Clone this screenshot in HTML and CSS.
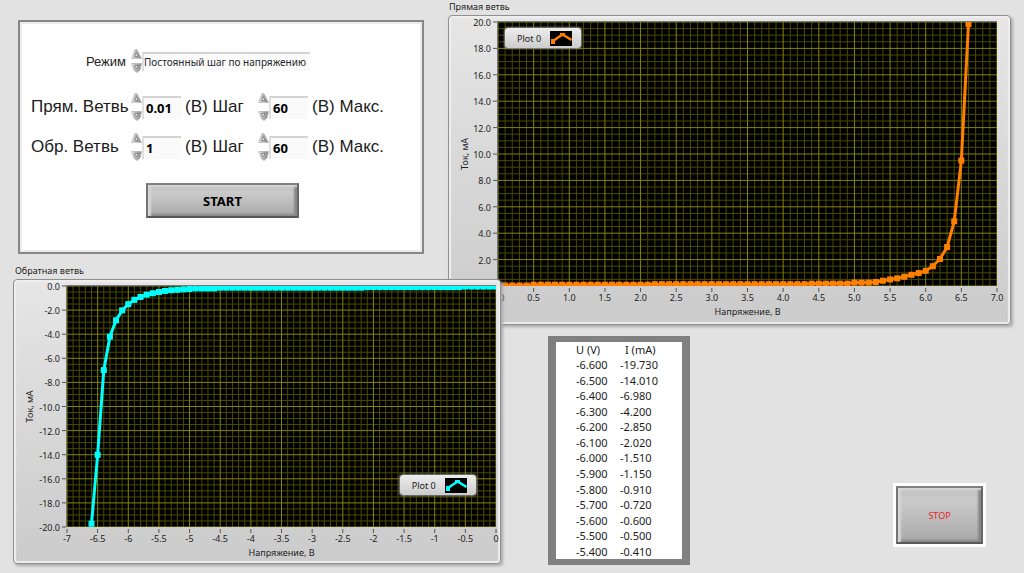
FILE: index.html
```
<!DOCTYPE html>
<html lang="ru">
<head>
<meta charset="utf-8">
<meta name="viewport" content="width=device-width, initial-scale=1">
<title>Вольт-амперная характеристика</title>
<link rel="stylesheet" href="styles.css">
</head>
<body>
<svg class="sprites" aria-hidden="true">
  <defs>
    <linearGradient id="metal" x1="0" x2="1" y1="0" y2="0">
      <stop offset="0" stop-color="#e4e4e4"/>
      <stop offset="1" stop-color="#848484"/>
    </linearGradient>
  </defs>
  <symbol id="inc" viewBox="0 0 11 10">
    <path d="M4 .5H6L10.5 9.5H.5Z" fill="url(#metal)" stroke="#b4b4b4" stroke-width=".6"/>
    <path d="M5.3 3.500 7 7.5H3.8Z" fill="#f4f4f4" stroke="#777" stroke-width=".8"/>
  </symbol>
  <symbol id="dec" viewBox="0 0 11 10">
    <path d="M.5.5H10.5L9 7 6 9.6 3.5 8Z" fill="url(#metal)" stroke="#a8a8a8" stroke-width=".6"/>
    <path d="M3.6 2.5H7.2L5.4 6Z" fill="#f4f4f4" stroke="#777" stroke-width=".8"/>
  </symbol>
</svg>
<main class="front-panel">
  <div class="column">
    <form class="settings">
      <div class="row row-mode">
        <label class="mode-label" for="mode">Режим</label>
        <div class="field field-wide">
          <span class="spin">
            <button type="button" aria-label="Предыдущий режим"><svg><use href="#inc"/></svg></button>
            <button type="button" aria-label="Следующий режим"><svg><use href="#dec"/></svg></button>
          </span>
          <select id="mode" class="box box-mode"><option>Постоянный шаг по напряжению</option></select>
        </div>
      </div>
      <div class="row">
        <label for="fstep">Прям. Ветвь</label>
        <div class="field">
          <span class="spin">
            <button type="button" aria-label="Больше"><svg><use href="#inc"/></svg></button>
            <button type="button" aria-label="Меньше"><svg><use href="#dec"/></svg></button>
          </span>
          <input id="fstep" class="box" type="text" value="0.01">
        </div>
        <span class="unit">(В) Шаг</span>
        <div class="field">
          <span class="spin">
            <button type="button" aria-label="Больше"><svg><use href="#inc"/></svg></button>
            <button type="button" aria-label="Меньше"><svg><use href="#dec"/></svg></button>
          </span>
          <input id="fmax" class="box" type="text" value="60">
        </div>
        <label class="unit" for="fmax">(В) Макс.</label>
      </div>
      <div class="row">
        <label for="rstep">Обр. Ветвь</label>
        <div class="field">
          <span class="spin">
            <button type="button" aria-label="Больше"><svg><use href="#inc"/></svg></button>
            <button type="button" aria-label="Меньше"><svg><use href="#dec"/></svg></button>
          </span>
          <input id="rstep" class="box" type="text" value="1">
        </div>
        <span class="unit">(В) Шаг</span>
        <div class="field">
          <span class="spin">
            <button type="button" aria-label="Больше"><svg><use href="#inc"/></svg></button>
            <button type="button" aria-label="Меньше"><svg><use href="#dec"/></svg></button>
          </span>
          <input id="rmax" class="box" type="text" value="60">
        </div>
        <label class="unit" for="rmax">(В) Макс.</label>
      </div>
      <button type="button" class="metal start">START</button>
    </form>

    <section class="reverse">
      <h2 class="caption">Обратная ветвь</h2>
      <div class="graph">
        <svg id="reverse" viewBox="14 280 486 283" role="img" aria-label="Обратная ветвь"></svg>
        <div class="legend legend-reverse">Plot 0
          <svg viewBox="0 0 22 15"><rect width="22" height="15" fill="#000"/><path d="M3 10 12.500 3.500 21.500 9" fill="none" stroke="#00ffff" stroke-width="2.500"/><path d="M1 8h4v5H1zM10 2h5v3h-5z" fill="#00ffff"/></svg>
        </div>
      </div>
    </section>
  </div>

  <div class="column">
    <section class="forward">
      <h2 class="caption">Прямая ветвь</h2>
      <div class="graph">
        <svg id="forward" viewBox="449 16 561 308" role="img" aria-label="Прямая ветвь"></svg>
        <div class="legend legend-forward">Plot 0
          <svg viewBox="0 0 22 15"><rect width="22" height="15" fill="#000"/><path d="M3 10 12.500 3.500 21.500 9" fill="none" stroke="#ff8000" stroke-width="2.500"/><path d="M1 8h4v5H1zM10 2h5v3h-5z" fill="#ff8000"/></svg>
        </div>
      </div>
    </section>
    <div class="results">
      <div class="table-frame">
        <table>
          <thead><tr><th>U (V)</th><th class="current">I (mA)</th></tr></thead>
          <tbody>
            <tr><td>-6.600</td><td>-19.730</td></tr>
            <tr><td>-6.500</td><td>-14.010</td></tr>
            <tr><td>-6.400</td><td>-6.980</td></tr>
            <tr><td>-6.300</td><td>-4.200</td></tr>
            <tr><td>-6.200</td><td>-2.850</td></tr>
            <tr><td>-6.100</td><td>-2.020</td></tr>
            <tr><td>-6.000</td><td>-1.510</td></tr>
            <tr><td>-5.900</td><td>-1.150</td></tr>
            <tr><td>-5.800</td><td>-0.910</td></tr>
            <tr><td>-5.700</td><td>-0.720</td></tr>
            <tr><td>-5.600</td><td>-0.600</td></tr>
            <tr><td>-5.500</td><td>-0.500</td></tr>
            <tr><td>-5.400</td><td>-0.410</td></tr>
          </tbody>
        </table>
      </div>
      <div class="stop-frame"><button type="button" class="metal stop">STOP</button></div>
    </div>
  </div>
</main>
<script src="plots.js"></script>
</body>
</html>
```
FILE: styles.css
```
* { box-sizing: border-box; }

body {
  margin: 0;
  background: #e2e2e2;
  color: #1c1c1c;
  font-family: "Noto Sans", "Open Sans", sans-serif;
}

button { padding: 0; border: 0; background: none; }

.sprites { display: block; width: 0; height: 0; }

.front-panel {
  display: grid;
  grid-template-columns: 435fr 563fr;
  padding: 0 13px 6px;
}

.column { display: flex; flex-direction: column; min-width: 0; }

/* Sweep settings */
.settings {
  display: flex;
  flex-direction: column;
  margin: 20px 24px 0 5px;
  padding: 27px 10px 34px 11px;
  background: #fff;
  border: 2px solid #868886;
  box-shadow: inset 0 0 0 2px #ececec;
  font-family: "Liberation Sans", sans-serif;
  font-size: 17px;
}

.row {
  display: grid;
  grid-template-columns: 100px 50px 77px 50px 1fr;
  align-items: center;
  height: 28px;
  margin-bottom: 12px;
  white-space: nowrap;
}

.row-mode { height: 24px; margin-bottom: 20px; }
.mode-label { padding-right: 5px; text-align: right; font-size: 13px; }
.field { display: flex; height: 100%; align-items: center; }
.field-wide { width: 179px; }
.unit { padding-left: 4px; }

.spin {
  display: flex;
  flex: none;
  flex-direction: column;
  justify-content: space-between;
  width: 11px;
  height: 100%;
}

.spin button { height: 10px; line-height: 0; }
.spin svg { display: block; width: 11px; height: 10px; }

.box {
  appearance: none;
  flex: 1;
  min-width: 0;
  height: 23px;
  margin: 0;
  padding: 0 0 1px 2px;
  border: 0;
  border-top: 2px solid #d4d4d4;
  border-left: 2px solid #e0e0e0;
  border-radius: 0;
  background: #fafafa;
  color: #000;
  font: bold 13px "Noto Sans", sans-serif;
}

.box-mode { height: 19px; padding: 0; color: #2a2a2a; font-size: 10px; font-weight: 400; }

.metal {
  border: 2px solid;
  border-color: #808080 #666 #585858 #747474;
  background: linear-gradient(#c2c2c2, #cacaca 25%, #b0b0b0 85%, #a6a6a6);
  box-shadow: inset 3px 2px 2px #d6d6d6, inset -3px -2px 2px #888;
  font-family: "Noto Sans", sans-serif;
}

.start {
  width: 153px;
  height: 35px;
  margin: 10px 0 0 115px;
  color: #000;
  font-size: 13px;
  font-weight: 700;
}

/* Graphs */
.caption {
  margin: 0;
  height: 15px;
  font-size: 9px;
  font-weight: 400;
  line-height: 13px;
}

.reverse {
  z-index: 1;
  width: calc(100% + 53px);
  margin-top: 10px;
}
.reverse .caption { padding-left: 2px; }
.forward .caption { padding-left: 1px; }

.graph {
  position: relative;
  border: 1px solid #909090;
  border-radius: 4px;
  background: linear-gradient(#e6e6e6, #d8d8d8 50%, #cbcbcb);
  box-shadow: inset 0 0 1px 2px #eee, 2px 2px 3px #aaa;
}

.graph > svg { display: block; width: 100%; height: auto; }
.graph text { fill: #222; font: 9px "Noto Sans", sans-serif; }
.tick { stroke: #555; }
.minor { stroke: #4a4a00; }
.major { stroke: #858500; }

.legend {
  position: absolute;
  display: flex;
  align-items: center;
  justify-content: space-between;
  width: 76px;
  height: 20px;
  padding: 0 9px 0 12px;
  border-radius: 3px;
  background: linear-gradient(#eee, #ccc);
  box-shadow: 0 0 2px 1px #888;
  font-size: 9px;
}
.legend svg { width: 22px; height: 15px; }
.legend-forward { top: 4%; left: 10%; }
.legend-reverse { top: 69%; right: 5%; }

/* Measured values and stop */
.results {
  display: flex;
  justify-content: space-between;
  align-items: flex-end;
  padding: 11px 25px 0 100px;
}

.table-frame {
  width: 142px;
  border: solid #808080;
  border-width: 6px 8px;
  background: #fff;
}

table { height: 217px; margin-left: 17px; border-collapse: collapse; font-size: 11px; line-height: 15px; }
th, td { padding: 0; text-align: left; font-weight: 400; }
th:first-child, td:first-child { min-width: 47px; padding-left: 3px; }
.current { padding-left: 5px; }

.stop-frame { margin-bottom: 18px; padding: 3px; background: #fff; }
.stop { width: 87px; height: 58px; color: #e8202a; font-size: 9px; }
```
FILE: plots.js
```
const NS = "http://www.w3.org/2000/svg";

function add(parent, name, attrs, text) {
  const el = document.createElementNS(NS, name);
  for (const key in attrs) el.setAttribute(key, attrs[key]);
  if (text !== undefined) el.textContent = text;
  parent.appendChild(el);
  return el;
}

function drawPlot(id, o) {
  const svg = document.getElementById(id);
  const X = v => o.left + (v - o.xmin) / 7 * (o.right - o.left);
  const Y = v => o.bottom - (v - o.ymin) / 20 * (o.bottom - o.top);
  const w = o.right - o.left, h = o.bottom - o.top;

  const clip = add(add(svg, "defs", {}), "clipPath", { id: id + "-clip" });
  add(clip, "rect", { x: o.left, y: o.top, width: w, height: h });
  add(svg, "rect", { x: o.left - 1, y: o.top - 1, width: w + 1, height: h + 1, fill: "#777" });
  add(svg, "rect", { x: o.left, y: o.top, width: w, height: h, fill: "#000" });

  const grid = add(svg, "g", { "clip-path": `url(#${id}-clip)` });
  for (const kind of ["minor", "major"]) {
    for (let i = 0; i <= 70; i++) {
      if ((i % 5 === 0) !== (kind === "major")) continue;
      const x = X(o.xmin + i / 10);
      add(grid, "line", { x1: x, x2: x, y1: o.top, y2: o.bottom, class: kind });
    }
    for (let i = 0; i <= 40; i++) {
      if ((i % 4 === 0) !== (kind === "major")) continue;
      const y = Y(o.ymin + i / 2);
      add(grid, "line", { x1: o.left, x2: o.right, y1: y, y2: y, class: kind });
    }
  }

  for (let i = 0; i <= 14; i++) {
    const v = o.xmin + i / 2, x = X(v);
    add(svg, "line", { x1: x, x2: x, y1: o.bottom + 2, y2: o.bottom + 6, class: "tick" });
    add(svg, "text", { x: x, y: o.bottom + 15, "text-anchor": "middle" }, o.format(v));
  }
  for (let i = o.firstY; i <= 10; i++) {
    const v = o.ymin + i * 2, y = Y(v);
    add(svg, "line", { x1: o.left - 5, x2: o.left - 1, y1: y, y2: y, class: "tick" });
    add(svg, "text", { x: o.left - 7, y: y + 4, "text-anchor": "end" }, v.toFixed(1));
  }
  add(svg, "text", { x: (o.left + o.right) / 2, y: o.bottom + 29, "text-anchor": "middle" }, "Напряжение, В");
  const cx = o.left - o.titleGap, cy = (o.top + o.bottom) / 2;
  add(svg, "text", { x: cx, y: cy, "text-anchor": "middle", transform: `rotate(-90 ${cx} ${cy})` }, "Ток, мА");

  const curve = add(svg, "g", { "clip-path": `url(#${id}-clip)`, fill: o.color });
  const pts = o.data.map(([a, b]) => [X(a), Y(b)]);
  add(curve, "polyline", { points: pts.join(" "), fill: "none", stroke: o.color, "stroke-width": 3 });
  for (const [x, y] of pts) add(curve, "rect", { x: x - 3, y: y - 3, width: 6, height: 6 });
}

const forward = [];
for (let i = 0; i <= 52; i++) {
  forward.push([i / 10, i < 5 ? 0.04 : i < 22 ? 0.1 : i < 44 ? 0.14 : i < 50 ? 0.18 : 0.26]);
}
forward.push(
  [5.3, 0.3], [5.4, 0.4], [5.5, 0.5], [5.6, 0.58], [5.7, 0.7], [5.8, 0.85], [5.9, 0.98],
  [6, 1.15], [6.1, 1.5], [6.2, 2.05], [6.3, 2.95], [6.4, 4.9], [6.5, 9.5], [6.6, 19.85]
);

const reverse = [19.73, 14.01, 6.98, 4.2, 2.85, 2.02, 1.51, 1.15, 0.91, 0.72, 0.6, 0.5, 0.41, 0.35, 0.32, 0.28, 0.25]
  .map((v, i) => [-6.6 + i / 10, -v]);
for (let i = -49; i <= 0; i++) {
  reverse.push([i / 10, i < -45 ? -0.2 : i < -21 ? -0.14 : i < -5 ? -0.1 : -0.05]);
}

drawPlot("forward", {
  left: 498, right: 997, top: 22, bottom: 286, xmin: 0, ymin: 0, firstY: 1, titleGap: 30,
  format: v => v.toFixed(1), color: "#ff8000", data: forward
});
drawPlot("reverse", {
  left: 67, right: 496, top: 286, bottom: 527, xmin: -7, ymin: -20, firstY: 0, titleGap: 34,
  format: v => String(v), color: "#00ffff", data: reverse
});
```
